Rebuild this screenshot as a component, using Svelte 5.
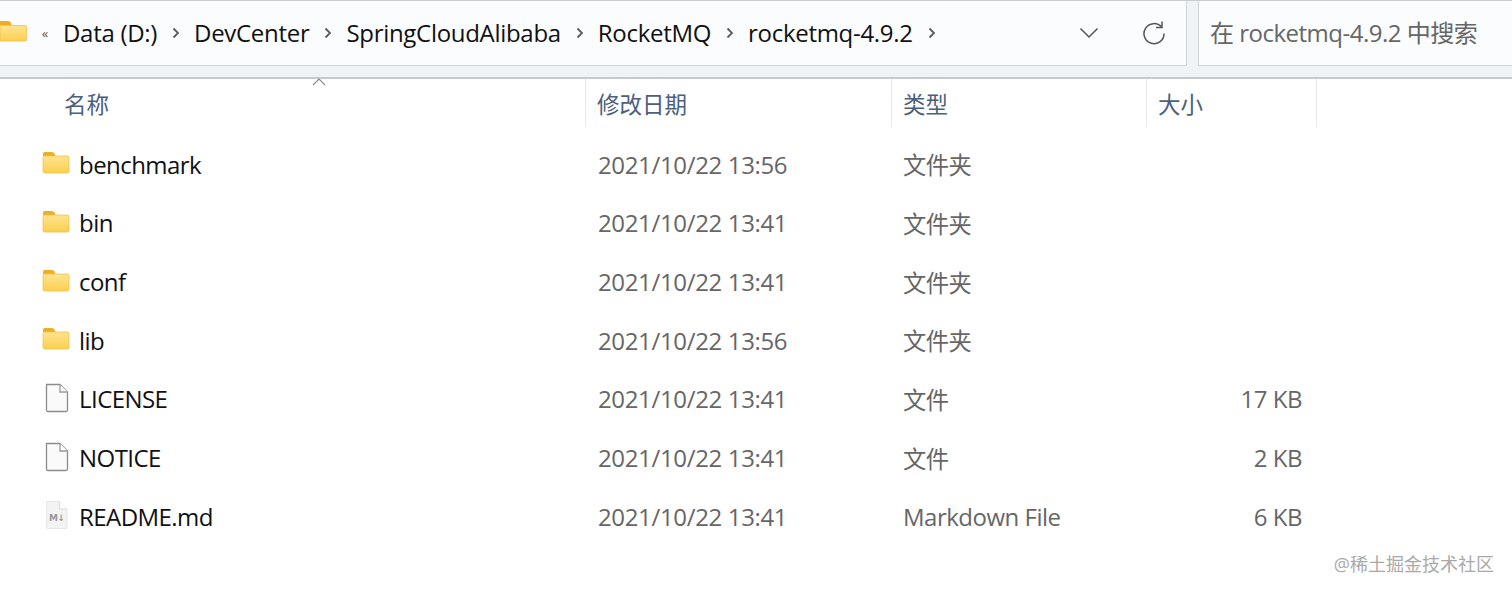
<script>
  const files = [
    { name: 'benchmark', date: '2021/10/22 13:56', type: '文件夹', size: '', icon: 'folder' },
    { name: 'bin', date: '2021/10/22 13:41', type: '文件夹', size: '', icon: 'folder' },
    { name: 'conf', date: '2021/10/22 13:41', type: '文件夹', size: '', icon: 'folder' },
    { name: 'lib', date: '2021/10/22 13:56', type: '文件夹', size: '', icon: 'folder' },
    { name: 'LICENSE', date: '2021/10/22 13:41', type: '文件', size: '17 KB', icon: 'file' },
    { name: 'NOTICE', date: '2021/10/22 13:41', type: '文件', size: '2 KB', icon: 'file' },
    { name: 'README.md', date: '2021/10/22 13:41', type: 'Markdown File', size: '6 KB', icon: 'md' }
  ];
  const crumbs = ['Data (D:)', 'DevCenter', 'SpringCloudAlibaba', 'RocketMQ', 'rocketmq-4.9.2'];
  const cols = ['名称', '修改日期', '类型', '大小'];
</script>

{#snippet folder()}
  <svg class="icon folder-icon" width="28" height="24" viewBox="0 0 28 24">
    <path d="M1 3.500Q1 2 2.500 2H10Q11.500 2 12.500 3.500L13.500 6H1Z" fill="#efae22" />
    <path d="M1 7.500Q1 6 2.500 6H25.500Q27 6 27 7.500V21.500Q27 23 25.500 23H2.500Q1 23 1 21.500Z" fill="url(#folder-fill)" stroke="#f0c04f" stroke-width="0.8" />
  </svg>
{/snippet}

{#snippet fileIcon(md)}
  <svg class="icon file-icon" width="28" height="30" viewBox="0 0 28 30">
    {#if md}
      <path d="M3.500 1.500H16.500L24 9V27.500Q24 28.500 23 28.500H4.500Q3.500 28.500 3.500 27.500Z" fill="#f3f3f3" stroke="#e6e6e6" />
      <path d="M16.500 1.500V9H24" fill="#fff" stroke="#dadada" />
      <text x="6" y="21" class="md-label">M↓</text>
    {:else}
      <path d="M3.500 1.500H17L24.500 9V27Q24.500 28.500 23 28.500H5Q3.500 28.500 3.500 27Z" fill="#fafafa" stroke="#8c8c8c" stroke-width="1.300" />
      <path d="M17 1.500V9H24.500" fill="#fff" stroke="#9a9a9a" stroke-width="1.300" />
    {/if}
  </svg>
{/snippet}

<div class="window">
  <svg class="defs" width="0" height="0">
    <defs>
      <linearGradient id="folder-fill" x1="0" y1="0" x2="0" y2="1">
        <stop offset="0" stop-color="#fee490" />
        <stop offset="1" stop-color="#fbd04f" />
      </linearGradient>
    </defs>
  </svg>

  <header class="toolbar">
    <div class="address">
      <svg class="address-folder" width="27" height="24" viewBox="0 0 27 24">
        <path d="M0 2H8Q10 2 11 4L12 6.500H0Z" fill="#efae22" />
        <path d="M0 6.500H25Q26.500 6.500 26.500 8V20.500Q26.500 22 25 22H0Z" fill="url(#folder-fill)" stroke="#f0c04f" stroke-width="0.8" />
      </svg>
      <span class="overflow">«</span>
      {#each crumbs as crumb}
        <span class="crumb">{crumb}</span>
        <svg class="sep" width="8" height="12" viewBox="0 0 8 12"><path d="M1.500 1.500L6 6L1.500 10.500" fill="none" stroke="#5b5b5b" stroke-width="1.800" /></svg>
      {/each}
      <div class="address-actions">
        <svg width="20" height="12" viewBox="0 0 20 12"><path d="M1.500 1.500L10 10L18.500 1.500" fill="none" stroke="#555" stroke-width="1.500" /></svg>
        <svg width="24" height="24" viewBox="0 0 24 24"><path d="M19.500 6A10 10 0 1 0 22 12.500" fill="none" stroke="#555" stroke-width="1.500" /><path d="M20 0.500V6.500H14" fill="none" stroke="#555" stroke-width="1.500" /></svg>
      </div>
    </div>
    <div class="search"><span>在 rocketmq-4.9.2 中搜索</span></div>
  </header>

  <div class="table">
    <div class="head">
      <svg class="sort" width="14" height="8" viewBox="0 0 14 8"><path d="M1 7L7 1L13 7" fill="none" stroke="#8a8a8a" stroke-width="1.100" /></svg>
      {#each cols as col}
        <div class="head-cell">{col}</div>
      {/each}
      <div></div>
    </div>

    <div class="rows">
      {#each files as f}
        <div class="row">
          <div class="cell name">
            <span class="icon-box">
              {#if f.icon === 'folder'}
                {@render folder()}
              {:else}
                {@render fileIcon(f.icon === 'md')}
              {/if}
            </span>
            {f.name}
          </div>
          <div class="cell muted date">{f.date}</div>
          <div class="cell muted type" class:cjk={f.icon !== 'md'}>{f.type}</div>
          <div class="cell muted size">{f.size}</div>
        </div>
      {/each}
    </div>
  </div>

  <div class="watermark">@稀土掘金技术社区</div>
</div>

<style>
  :global(body) {
    margin: 0;
    background: #fff;
  }

  .window {
    position: relative;
    width: 1512px;
    height: 594px;
    overflow: hidden;
    background: #fff;
    font-family: "Open Sans", "Noto Sans CJK SC", sans-serif;
    font-size: 24px;
    color: #111;
  }

  .defs {
    position: absolute;
  }

  .toolbar {
    display: flex;
    gap: 11px;
    height: 79px;
    box-sizing: border-box;
    background: #eff3f6;
    border-top: 1px solid #c9cdd0;
    border-bottom: 2px solid #c6cacc;
  }

  .address, .search {
    display: flex;
    align-items: center;
    height: 65px;
    box-sizing: border-box;
    background: #fbfcfd;
    border-bottom: 1px solid #cfd4d7;
  }

  .address {
    width: 1187px;
    flex-shrink: 0;
    border-right: 1px solid #cfd4d7;
  }

  .address-folder {
    flex-shrink: 0;
    margin-top: -5px;
  }

  .overflow {
    width: 36px;
    text-align: center;
    font-size: 13px;
    color: #555;
  }

  .crumb {
    white-space: nowrap;
    letter-spacing: -0.3px;
    margin-top: -1px;
  }

  .sep {
    flex-shrink: 0;
    margin: 0 14px 0 15px;
  }

  .address-actions {
    display: flex;
    align-items: center;
    gap: 43px;
    margin-left: auto;
    padding-right: 20px;
  }

  .search {
    flex: 1;
    padding-left: 11px;
    border-left: 1px solid #cfd4d7;
    color: #666;
    letter-spacing: -0.5px;
    white-space: nowrap;
  }

  .search span {
    margin-top: -3px;
  }

  .head {
    position: relative;
    display: grid;
    grid-template-columns: 586px 306px 255px 170px 1fr;
    height: 48px;
    padding-top: 3px;
    box-sizing: border-box;
  }

  .sort {
    position: absolute;
    left: 312px;
    top: -1px;
  }

  .head-cell {
    display: flex;
    align-items: center;
    padding-left: 11px;
    border-right: 1px solid #e6e9eb;
    color: #4c607a;
    font-size: 22.500px;
    margin-top: -3px;
    padding-top: 1px;
  }

  .head-cell:first-of-type {
    padding-left: 64px;
  }

  .rows {
    padding-top: 8px;
  }

  .row {
    display: grid;
    grid-template-columns: 585px 306px 255px 156px;
    height: 58.660px;
    align-items: center;
  }

  .cell {
    display: flex;
    align-items: center;
    letter-spacing: -0.5px;
    white-space: nowrap;
  }

  .name {
    padding-left: 42px;
    letter-spacing: -0.55px;
  }

  .icon-box {
    display: flex;
    justify-content: flex-start;
    width: 37px;
  }

  .folder-icon {
    margin-top: -4px;
  }

  .file-icon {
    margin-top: -2px;
    margin-left: 1px;
  }

  .muted {
    color: #666;
  }

  .date {
    padding-left: 13px;
    letter-spacing: -0.35px;
  }

  .type {
    padding-left: 12px;
  }

  .cjk {
    font-size: 23.300px;
  }

  .size {
    justify-content: flex-end;
  }

  .md-label {
    font-family: "DejaVu Sans", sans-serif;
    font-size: 9px;
    font-weight: 700;
    fill: #999;
  }

  .watermark {
    position: absolute;
    right: 18px;
    bottom: 18px;
    font-size: 18px;
    color: #a9a9a9;
    white-space: nowrap;
  }
</style>
